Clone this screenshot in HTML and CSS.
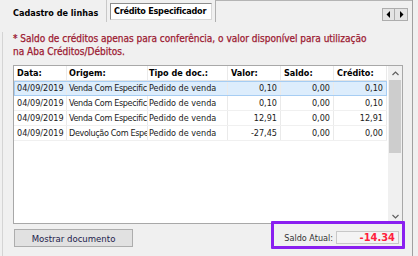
FILE: index.html
```html
<!DOCTYPE html>
<html lang="pt">
<head>
<meta charset="utf-8">
<link rel="stylesheet" href="styles.css">
</head>
<body>
<div class="app">
  <div class="tabbar">
    <div class="tab">Cadastro de linhas</div>
    <div class="tab tab-active"><span class="tab-focus">Crédito Especificador</span></div>
    <div class="tab-rest">
      <div class="arrows">
        <span class="arrow"><svg width="5" height="7" viewBox="0 0 5 7"><path d="M4 0 L4 7 L0.5 3.5 Z" fill="#000"/></svg></span>
        <span class="arrow"><svg width="5" height="7" viewBox="0 0 5 7"><path d="M1 0 L1 7 L4.5 3.5 Z" fill="#000"/></svg></span>
      </div>
    </div>
  </div>
  <div class="panel">
    <p class="notice">* Saldo de créditos apenas para conferência, o valor disponível para utilização<br>na Aba Créditos/Débitos.</p>
    <div class="grid-frame">
      <div class="grid">
        <div class="row head">
          <div class="c c-data">Data:</div>
          <div class="c c-orig">Origem:</div>
          <div class="c c-tipo">Tipo de doc.:</div>
          <div class="c c-num">Valor:</div>
          <div class="c c-num">Saldo:</div>
          <div class="c c-num">Crédito:</div>
        </div>
        <div class="row sel">
          <div class="c c-data">04/09/2019</div>
          <div class="c c-orig">Venda Com Especificador</div>
          <div class="c c-tipo">Pedido de venda</div>
          <div class="c c-num r">0,10</div>
          <div class="c c-num r">0,00</div>
          <div class="c c-num r">0,10</div>
        </div>
        <div class="row">
          <div class="c c-data">04/09/2019</div>
          <div class="c c-orig">Venda Com Especificador</div>
          <div class="c c-tipo">Pedido de venda</div>
          <div class="c c-num r">0,10</div>
          <div class="c c-num r">0,00</div>
          <div class="c c-num r">0,10</div>
        </div>
        <div class="row">
          <div class="c c-data">04/09/2019</div>
          <div class="c c-orig">Venda Com Especificador</div>
          <div class="c c-tipo">Pedido de venda</div>
          <div class="c c-num r">12,91</div>
          <div class="c c-num r">0,00</div>
          <div class="c c-num r">12,91</div>
        </div>
        <div class="row">
          <div class="c c-data">04/09/2019</div>
          <div class="c c-orig">Devolução Com Especificador</div>
          <div class="c c-tipo">Pedido de venda</div>
          <div class="c c-num r">-27,45</div>
          <div class="c c-num r">0,00</div>
          <div class="c c-num r">0,00</div>
        </div>
      </div>
      <div class="vscroll">
        <div class="sb-btn"><svg width="7" height="5" viewBox="0 0 7 5"><path d="M0.5 4 L3.5 1 L6.5 4" fill="none" stroke="#606060" stroke-width="1.2"/></svg></div>
        <div class="sb-track"><div class="sb-thumb"></div></div>
        <div class="sb-btn"><svg width="7" height="5" viewBox="0 0 7 5"><path d="M0.5 1 L3.5 4 L6.5 1" fill="none" stroke="#606060" stroke-width="1.2"/></svg></div>
      </div>
    </div>
    <div class="bottom">
      <button class="btn">Mostrar documento</button>
      <div class="saldo">
        <span class="saldo-label">Saldo Atual:</span>
        <span class="saldo-box">-14.34</span>
      </div>
    </div>
  </div>
  <div class="highlight"></div>
</div>
</body>
</html>
```

FILE: styles.css
```css
* { box-sizing: border-box; }
html, body { margin: 0; padding: 0; }
body {
  background: #f0f0f0;
  font-family: "DejaVu Sans", "Liberation Sans", sans-serif;
  font-stretch: condensed;
  font-size: 9px;
  color: #000;
  width: 418px;
  height: 256px;
  overflow: hidden;
}
.app {
  position: relative;
  width: 413px;
  height: 256px;
  border-right: 1px solid #a0a0a0;
}
.tabbar {
  display: flex;
  height: 23px;
}
.tab {
  font-weight: bold;
  font-size: 9px;
  width: 106px;
  padding: 8px 0 0 13px;
  height: 23px;
}
.tab-active {
  width: 110px;
  padding: 3px 3px 0 3px;
  border-left: 1px solid #c8c8c8;
  border-right: 1px solid #b0b0b0;
  height: 22px;
}
.tab-focus {
  display: block;
  background: #fff;
  border: 1px solid #8c8c8c;
  border-right-color: #d8d8d8;
  border-bottom-color: #d8d8d8;
  padding: 1px 0 1px 3px;
  height: 17px;
  line-height: 13px;
  white-space: nowrap;
  letter-spacing: -0.25px;
}
.tab-rest {
  flex: 1;
  border-top: 1px solid #b4b4b4;
  display: flex;
  justify-content: flex-end;
  padding: 7px 4px 0 0;
}
.arrows { display: flex; height: 13px; }
.arrow {
  width: 13px;
  height: 13px;
  border: 1px solid #adadad;
  background: #e4e4e4;
  display: flex;
  align-items: center;
  justify-content: center;
}
.arrow + .arrow { border-left: none; }
.panel {
  margin-left: 2px;
  border-left: 1px solid #d4d4d4;
  padding-left: 10px;
  height: 233px;
}
.notice {
  margin: 9px 0 0 0;
  color: #9c1a32;
  font-size: 10px;
  line-height: 13px;
  -webkit-text-stroke: 0.25px #9c1a32;
}
.grid-frame {
  margin-top: 7px;
  width: 390px;
  height: 159px;
  border: 1px solid #a8a8a8;
  background: #fff;
  display: flex;
}
.grid { width: 373px; }
.row {
  display: flex;
  height: 15px;
  border-bottom: 1px solid #f0f0f0;
}
.row.head {
  height: 15px;
  font-weight: bold;
  border-bottom: 1px solid #e5e5e5;
}
.row.sel {
  background: #ddedfc;
  outline: 1px solid #a6cdf3;
  outline-offset: -1px;
}
.c {
  white-space: nowrap;
  overflow: hidden;
  padding: 0 3px;
  line-height: 14px;
  border-right: 1px solid #eaeaea;
  color: #1a1a1a;
}
.head .c { color: #000; }
.c-data { width: 53px; }
.c-orig { width: 81px; padding-left: 2px; }
.row:not(.head) .c-orig { letter-spacing: -0.35px; }
.c-tipo { width: 80px; padding-left: 1px; }
.c-num { width: 53px; }
.c.r { text-align: right; }
.vscroll {
  margin-left: 1px;
  width: 14px;
  display: flex;
  flex-direction: column;
  background: #f0f0f0;
}
.sb-btn {
  height: 14px;
  display: flex;
  align-items: center;
  justify-content: center;
}
.sb-track { flex: 1; }
.sb-thumb { height: 73px; background: #cdcdcd; margin: 0 1px; }
.bottom {
  margin-top: 5px;
  display: flex;
  justify-content: space-between;
  align-items: flex-start;
  width: 386px;
}
.btn {
  margin-left: 1px;
  width: 119px;
  height: 18px;
  border: 1px solid #adadad;
  background: #e1e1e1;
  font-family: inherit;
  font-stretch: condensed;
  font-size: 9.5px;
  color: #1c1c4c;
  padding: 0;
}
.saldo {
  display: flex;
  align-items: center;
  gap: 3px;
  margin-top: 2px;
}
.saldo-label { font-size: 9px; color: #333; }
.saldo-box {
  width: 63px;
  height: 13px;
  border: 1px solid #c8c8c8;
  background: #f4f4f4;
  color: #ff1f3d;
  font-weight: bold;
  font-size: 11px;
  text-align: right;
  line-height: 11px;
  padding-right: 3px;
}
.highlight {
  position: absolute;
  left: 271px;
  top: 221px;
  width: 134px;
  height: 28px;
  border: 3px solid #8a1ff0;
  border-radius: 1px;
}
```
